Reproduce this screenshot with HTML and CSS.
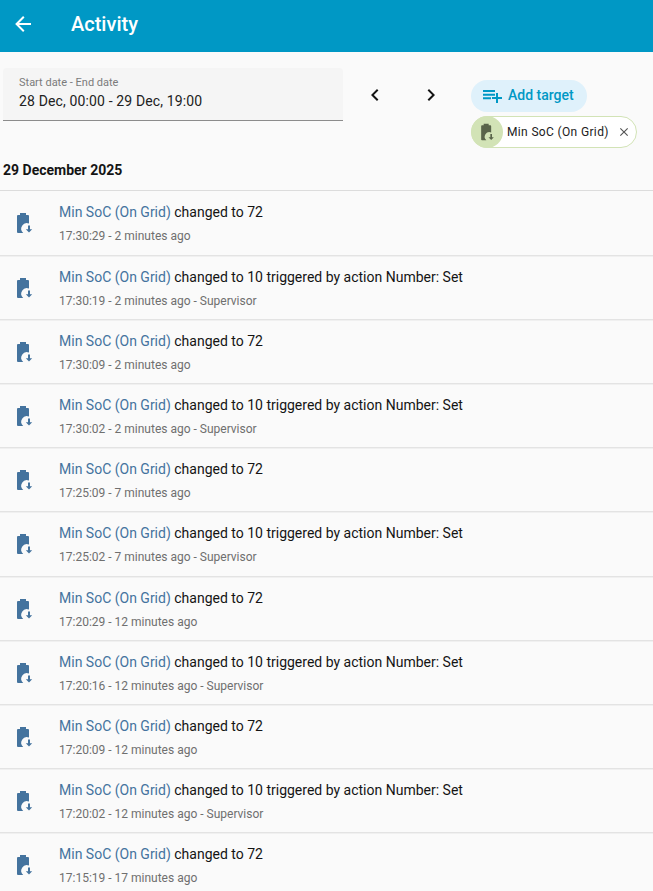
FILE: index.html
```html
<!DOCTYPE html>
<html lang="en">
<head>
<meta charset="utf-8">
<title>Activity</title>
<link rel="stylesheet" href="styles.css">
</head>
<body>
<svg class="defs" width="0" height="0" aria-hidden="true">
  <symbol id="bat" viewBox="0 0 24 24">
    <path d="M8 2h6v2h2a1 1 0 0 1 1 1V12.6a5.6 5.6 0 0 0-5.8 9.4H6a1 1 0 0 1-1-1V5a1 1 0 0 1 1-1h2z"/>
    <path d="M16 14.5h2v3.8h2.2L17 21.5l-3.2-3.2H16z"/>
  </symbol>
</svg>
<header class="topbar">
  <svg class="back" viewBox="0 0 24 24"><path d="M20 11v2H8l5.5 5.5-1.42 1.42L4.16 12l7.92-7.92L13.5 5.5 8 11h12z"/></svg>
  <div class="title">Activity</div>
</header>
<section class="filters">
  <div class="datefield">
    <div class="datelabel">Start date - End date</div>
    <div class="datevalue">28 Dec, 00:00 - 29 Dec, 19:00</div>
  </div>
  <div class="navs">
    <svg class="chev" viewBox="0 0 24 24"><path d="M15.41 16.58 10.83 12l4.58-4.59L14 6l-6 6 6 6z"/></svg>
    <svg class="chev" viewBox="0 0 24 24"><path d="M8.59 16.58 13.17 12 8.59 7.41 10 6l6 6-6 6z"/></svg>
  </div>
  <div class="targets">
    <div class="addtarget">
      <svg class="addicon" viewBox="0 0 24 24"><path d="M2 6h12v2H2zM2 9.67h12v2H2zM2 13.33h8v2H2zM15 9h2v4h4v2h-4v4h-2v-4h-4v-2h4z"/></svg>
      <span>Add target</span>
    </div>
    <div class="chip">
      <span class="chipicon"><svg class="chipbat"><use href="#bat"/></svg></span>
      <span class="chiplabel">Min SoC (On Grid)</span>
      <svg class="chipx" viewBox="0 0 24 24"><path d="M19 6.41 17.59 5 12 10.59 6.41 5 5 6.41 10.59 12 5 17.59 6.41 19 12 13.41 17.59 19 19 17.59 13.41 12z"/></svg>
    </div>
  </div>
</section>
<h2 class="day">29 December 2025</h2>
<ul class="log">
  <li class="row"><svg class="rowicon"><use href="#bat"/></svg><div><div class="line"><span class="ent">Min SoC (On Grid)</span> changed to 72</div><div class="meta">17:30:29 - 2 minutes ago</div></div></li>
  <li class="row"><svg class="rowicon"><use href="#bat"/></svg><div><div class="line"><span class="ent">Min SoC (On Grid)</span> changed to 10 triggered by action Number: Set</div><div class="meta">17:30:19 - 2 minutes ago - Supervisor</div></div></li>
  <li class="row"><svg class="rowicon"><use href="#bat"/></svg><div><div class="line"><span class="ent">Min SoC (On Grid)</span> changed to 72</div><div class="meta">17:30:09 - 2 minutes ago</div></div></li>
  <li class="row"><svg class="rowicon"><use href="#bat"/></svg><div><div class="line"><span class="ent">Min SoC (On Grid)</span> changed to 10 triggered by action Number: Set</div><div class="meta">17:30:02 - 2 minutes ago - Supervisor</div></div></li>
  <li class="row"><svg class="rowicon"><use href="#bat"/></svg><div><div class="line"><span class="ent">Min SoC (On Grid)</span> changed to 72</div><div class="meta">17:25:09 - 7 minutes ago</div></div></li>
  <li class="row"><svg class="rowicon"><use href="#bat"/></svg><div><div class="line"><span class="ent">Min SoC (On Grid)</span> changed to 10 triggered by action Number: Set</div><div class="meta">17:25:02 - 7 minutes ago - Supervisor</div></div></li>
  <li class="row"><svg class="rowicon"><use href="#bat"/></svg><div><div class="line"><span class="ent">Min SoC (On Grid)</span> changed to 72</div><div class="meta">17:20:29 - 12 minutes ago</div></div></li>
  <li class="row"><svg class="rowicon"><use href="#bat"/></svg><div><div class="line"><span class="ent">Min SoC (On Grid)</span> changed to 10 triggered by action Number: Set</div><div class="meta">17:20:16 - 12 minutes ago - Supervisor</div></div></li>
  <li class="row"><svg class="rowicon"><use href="#bat"/></svg><div><div class="line"><span class="ent">Min SoC (On Grid)</span> changed to 72</div><div class="meta">17:20:09 - 12 minutes ago</div></div></li>
  <li class="row"><svg class="rowicon"><use href="#bat"/></svg><div><div class="line"><span class="ent">Min SoC (On Grid)</span> changed to 10 triggered by action Number: Set</div><div class="meta">17:20:02 - 12 minutes ago - Supervisor</div></div></li>
  <li class="row"><svg class="rowicon"><use href="#bat"/></svg><div><div class="line"><span class="ent">Min SoC (On Grid)</span> changed to 72</div><div class="meta">17:15:19 - 17 minutes ago</div></div></li>
</ul>
</body>
</html>
```
FILE: styles.css
```css
* { box-sizing: border-box; }
html, body { margin: 0; padding: 0; height: 891px; overflow: hidden; }
body { background: #fafafa; font-family: Roboto, sans-serif; color: #141414; }
.defs { position: absolute; }
.topbar { height: 52px; background: #0098c5; color: #fff; display: flex; align-items: center; padding-left: 11px; padding-bottom: 4px; }
.back { width: 24px; height: 24px; fill: #fff; }
.title { margin-left: 36px; font-size: 20px; font-weight: 500; line-height: 24px; }
.filters { display: flex; padding: 16px 16px 0 3px; align-items: flex-start; height: 108px; }
.datefield { width: 340px; height: 53px; background: #f5f5f5; border-bottom: 1px solid #8c8c8c; border-radius: 4px 4px 0 0; padding: 8px 16px 0; }
.datelabel { font-size: 11px; line-height: 13px; color: #7b7b7b; }
.datevalue { font-size: 14px; line-height: 20px; margin-top: 2px; color: #212121; letter-spacing: .14px; }
.navs { display: flex; gap: 32px; padding: 15px 0 0 20px; width: 128px; }
.chev { width: 24px; height: 24px; fill: #141414; flex: none; }
.targets { display: flex; flex-direction: column; gap: 4px; padding-top: 12px; }
.addtarget { width: 116px; height: 32px; border-radius: 16px; background: #dff1fb; color: #0098c5; display: flex; align-items: center; padding-left: 10px; padding-bottom: 2px; gap: 3px; font-size: 14px; font-weight: 500; }
.addicon { width: 24px; height: 24px; fill: #0098c5; flex: none; margin-top: 2px; }
.chip { width: 166px; height: 32px; border-radius: 16px; border: 1px solid #d2e3b6; background: #fff; display: flex; align-items: center; position: relative; }
.chipicon { width: 32px; height: 32px; margin: -1px 0 -1px -1px; border-radius: 50%; background: #d2e3b6; display: flex; align-items: center; justify-content: center; flex: none; }
.chipbat { width: 20px; height: 20px; fill: #59644a; }
.chiplabel { font-size: 12px; letter-spacing: .35px; color: #212121; margin-left: 4px; white-space: nowrap; }
.chipx { width: 14px; height: 14px; fill: #555; margin-left: 8px; flex: none; }
.day { margin: 0; padding-left: 3px; font-size: 14px; line-height: 20px; font-weight: 700; color: #141414; height: 30.4px; }
.log { list-style: none; margin: 0; padding: 0; }
.row { height: 64.2px; border-top: 1px solid #e3e3e3; box-shadow: inset 0 1px 0 #f0f0f0; display: flex; padding: 11px 0 0 12px; gap: 23px; }
.row:first-child { border-top-color: #dcdcdc; box-shadow: none; }
.rowicon { width: 24px; height: 24px; fill: #44739e; margin-top: 9px; flex: none; }
.line { font-size: 14px; line-height: 20px; color: #141414; }
.ent { color: #44739e; }
.meta { font-size: 12px; line-height: 16px; margin-top: 6px; color: #6f6f6f; }
```
